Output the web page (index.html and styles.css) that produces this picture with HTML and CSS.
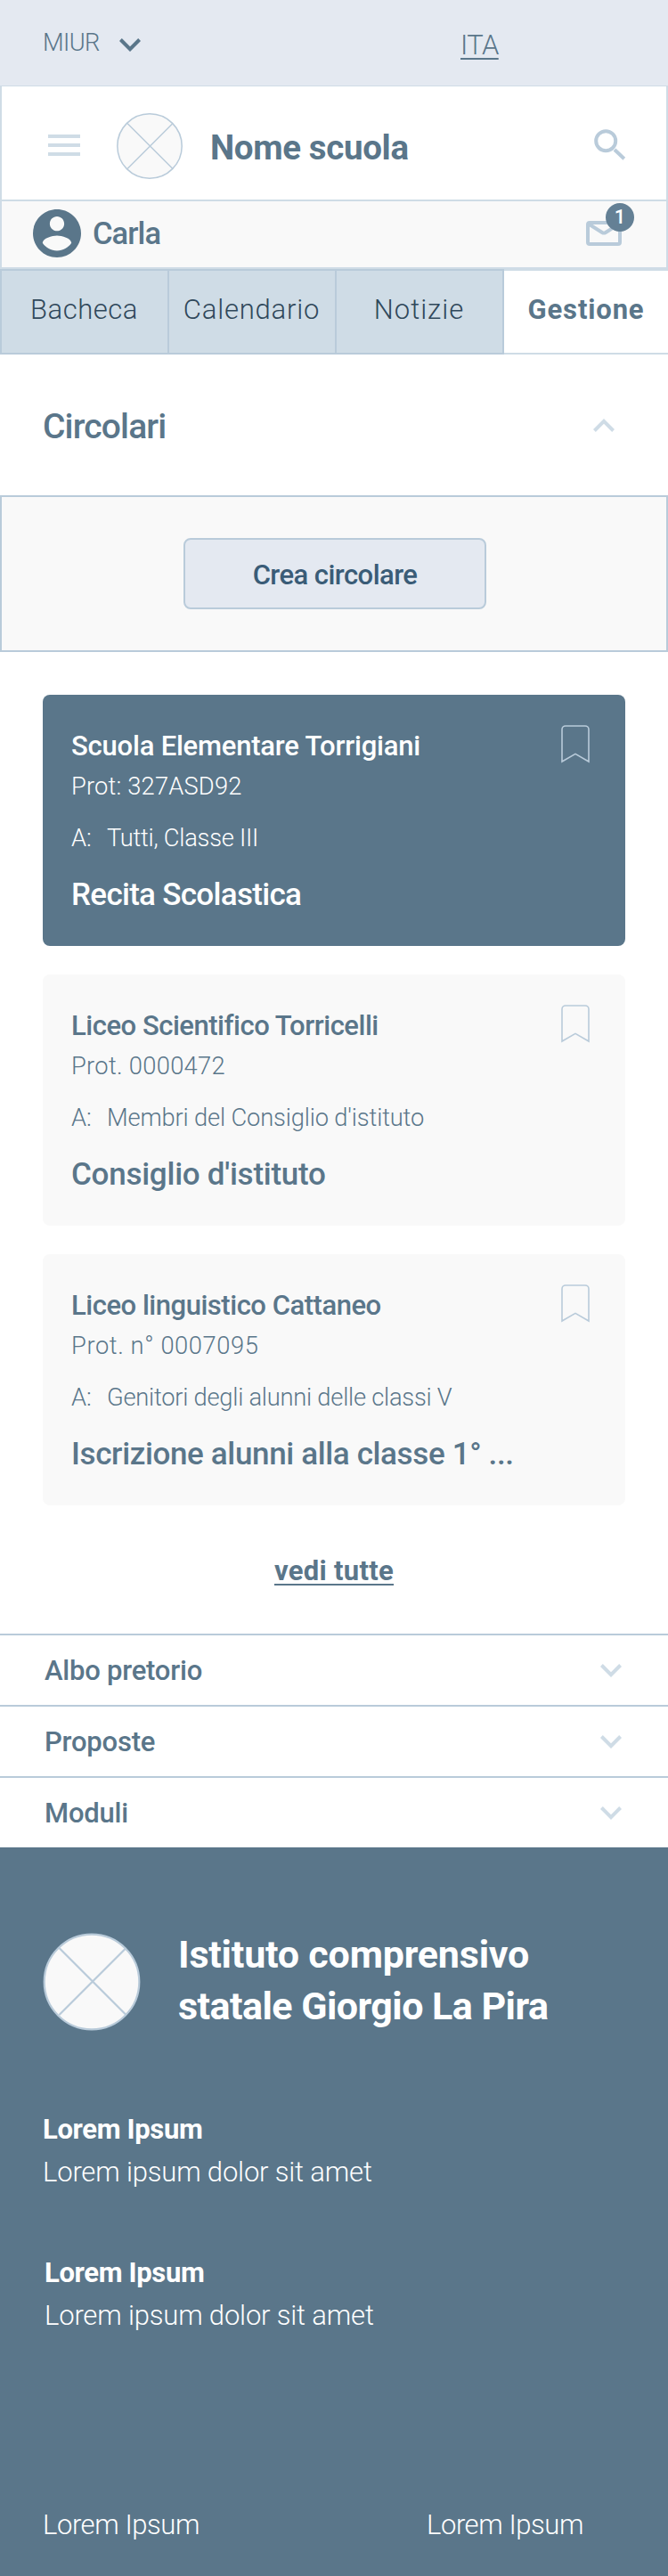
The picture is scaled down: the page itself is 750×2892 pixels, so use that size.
FILE: index.html
```html
<!DOCTYPE html>
<html lang="it">
<head>
<meta charset="utf-8">
<meta name="viewport" content="width=750">
<title>Nome scuola - Gestione circolari</title>
<link rel="stylesheet" href="styles.css">
</head>
<body>
<svg class="defs" width="0" height="0" aria-hidden="true">
  <symbol id="down" viewBox="6 8.59 12 7.41"><path d="M16.59 8.59L12 13.17 7.41 8.59 6 10l6 6 6-6z"/></symbol>
  <symbol id="up" viewBox="6 8 12 7.41"><path d="M12 8l-6 6 1.41 1.41L12 10.83l4.59 4.58L18 14z"/></symbol>
  <symbol id="bookmark" viewBox="0 0 32 43"><path d="M1 41V5a4 4 0 0 1 4-4h22a4 4 0 0 1 4 4v36L16 32.3z"/></symbol>
</svg>

<div class="topbar">
  <a class="miur">MIUR</a>
  <svg class="miur-arrow" width="24" height="15"><use href="#down"/></svg>
  <a class="lang">ITA</a>
</div>

<header class="header">
  <svg class="menu" width="36" height="24" viewBox="0 0 36 24"><path d="M0 2h36M0 12h36M0 22h36"/></svg>
  <svg class="logo" width="74" height="74" viewBox="0 0 74 74"><circle cx="37" cy="37" r="36.2"/><path d="M12 11.5L63 62.5M62.5 12L12 62.5"/></svg>
  <h1 class="school">Nome scuola</h1>
  <svg class="search" width="36" height="36" viewBox="0 0 36 36"><circle cx="13.2" cy="13.2" r="11"/><path d="M23 23l10.8 10.3"/></svg>
</header>

<div class="user">
  <svg class="avatar" width="54" height="54" viewBox="2 2 20 20"><path d="M12 2C6.48 2 2 6.48 2 12s4.48 10 10 10 10-4.48 10-10S17.52 2 12 2zm0 3c1.66 0 3 1.34 3 3s-1.34 3-3 3-3-1.34-3-3 1.34-3 3-3zm0 14.2c-2.5 0-4.71-1.28-6-3.22.03-1.99 4-3.08 6-3.08 1.99 0 5.97 1.09 6 3.08-1.29 1.94-3.5 3.22-6 3.22z"/></svg>
  <span class="user-name">Carla</span>
  <div class="inbox">
    <svg width="40" height="28" viewBox="0 0 40 28"><rect x="2" y="2" width="36" height="24" rx="2"/><path d="M3 3.5L18 13q2 1.2 4 0L37 3.5"/></svg>
    <span class="badge">1</span>
  </div>
</div>

<nav class="tabs">
  <a class="tab bacheca">Bacheca</a>
  <a class="tab calendario">Calendario</a>
  <a class="tab notizie">Notizie</a>
  <a class="tab active">Gestione</a>
</nav>

<main>
  <section class="section-head">
    <h2>Circolari</h2>
    <svg class="chevron" width="24" height="15"><use href="#up"/></svg>
  </section>

  <div class="create">
    <button class="create-btn">Crea circolare</button>
  </div>

  <div class="cards">
    <article class="card selected">
      <svg class="mark" width="32" height="43"><use href="#bookmark"/></svg>
      <h3 class="t1">Scuola Elementare Torrigiani</h3>
      <p class="prot p1">Prot: 327ASD92</p>
      <p class="to"><span class="to-label">A:</span><span class="d1">Tutti, Classe III</span></p>
      <p class="subject s1">Recita Scolastica</p>
    </article>
    <article class="card">
      <svg class="mark" width="32" height="43"><use href="#bookmark"/></svg>
      <h3 class="t2">Liceo Scientifico Torricelli</h3>
      <p class="prot p2">Prot. 0000472</p>
      <p class="to"><span class="to-label">A:</span><span class="d2">Membri del Consiglio d'istituto</span></p>
      <p class="subject s2">Consiglio d'istituto</p>
    </article>
    <article class="card">
      <svg class="mark" width="32" height="43"><use href="#bookmark"/></svg>
      <h3 class="t2">Liceo linguistico Cattaneo</h3>
      <p class="prot p3">Prot. n° 0007095</p>
      <p class="to"><span class="to-label">A:</span><span class="d3">Genitori degli alunni delle classi V</span></p>
      <p class="subject s3">Iscrizione alunni alla classe 1° ...</p>
    </article>
  </div>

  <div class="more"><a>vedi tutte</a></div>

  <ul class="accordion">
    <li><span class="albo">Albo pretorio</span><svg class="chevron" width="24" height="15"><use href="#down"/></svg></li>
    <li><span>Proposte</span><svg class="chevron" width="24" height="15"><use href="#down"/></svg></li>
    <li><span>Moduli</span><svg class="chevron" width="24" height="15"><use href="#down"/></svg></li>
  </ul>
</main>

<footer class="footer">
  <div class="brand">
    <svg class="logo" width="110" height="110" viewBox="0 0 110 110"><circle cx="55" cy="55" r="53.3"/><path d="M18.5 17L93.5 92M93.5 17L18.5 92"/></svg>
    <p class="institute"><span class="line1">Istituto comprensivo</span><span class="line2">statale Giorgio La Pira</span></p>
  </div>
  <div class="info">
    <strong>Lorem Ipsum</strong>
    <p>Lorem ipsum dolor sit amet</p>
  </div>
  <div class="info second">
    <strong>Lorem Ipsum</strong>
    <p>Lorem ipsum dolor sit amet</p>
  </div>
  <div class="links"><a>Lorem Ipsum</a><a>Lorem Ipsum</a></div>
</footer>
</body>
</html>
```

FILE: styles.css
```css
:root {
  --slate: #5a768a;
  --line: #b9cbda;
  --pale: #cfdce6;
  --mist: #e4e9f1;
  --off: #f9f9f9;
}
* { box-sizing: border-box; margin: 0; padding: 0; }
body {
  width: 750px;
  background: #fff;
  color: var(--slate);
  font-family: Roboto, "Open Sans", sans-serif;
  font-size: 31px;
  font-weight: 300;
}
svg { display: block; flex: none; fill: currentColor; }
.defs { position: absolute; }

.topbar {
  display: flex;
  align-items: flex-start;
  height: 96px;
  padding: 28px 0 0 48px;
  background: var(--mist);
  line-height: 40px;
}
.miur { width: 86px; font-size: 27.3px; letter-spacing: -.6px; }
.miur-arrow { margin-top: 15px; }
.lang {
  margin: 3px 0 0 359px;
  letter-spacing: -.6px;
  text-decoration: underline;
  text-decoration-thickness: 2px;
  text-decoration-skip-ink: none;
  text-underline-offset: 4px;
}

.header {
  display: flex;
  align-items: flex-start;
  height: 130px;
  padding: 0 45px 0 52px;
  border: 2px solid var(--pale);
  border-top-width: 1px;
}
.menu { margin-top: 54px; fill: none; stroke: var(--pale); stroke-width: 4; }
.logo { fill: var(--off); stroke: var(--line); stroke-width: 1.5; }
.header .logo { margin: 30px 0 0 41px; }
.school {
  flex: 1;
  margin: 44px 0 0 31px;
  font-size: 38.5px;
  font-weight: 700;
  line-height: 50px;
  letter-spacing: -.35px;
}
.search { margin-top: 48px; fill: none; stroke: var(--line); stroke-width: 4; }

.user {
  display: flex;
  align-items: flex-start;
  height: 76px;
  padding: 0 50px 0 35px;
  border: solid var(--pale);
  border-width: 0 2px 2px;
  background: var(--off);
}
.avatar { margin-top: 9px; }
.user-name {
  flex: 1;
  margin: 16px 0 0 13px;
  font-size: 34.5px;
  font-weight: 500;
  line-height: 40px;
  letter-spacing: -.9px;
}
.inbox { position: relative; margin-top: 22px; }
.inbox svg { fill: none; stroke: var(--line); stroke-width: 4; }
.badge {
  position: absolute;
  left: 22px;
  top: -20px;
  width: 32px;
  height: 32px;
  border-radius: 50%;
  background: #648095;
  color: #fff;
  font-size: 22px;
  font-weight: 500;
  line-height: 32px;
  text-align: center;
}

.tabs { display: flex; height: 96px; }
.tab {
  width: 188px;
  border: solid var(--line);
  border-width: 2px 0 2px 2px;
  background: var(--pale);
  color: #30485b;
  line-height: 87px;
  text-align: center;
}
.bacheca { padding-right: 1px; letter-spacing: .5px; }
.calendario { padding-right: 1px; letter-spacing: .8px; }
.notizie { width: 190px; padding-right: 1px; border-right-width: 2px; letter-spacing: 1px; }
.active {
  width: 184px;
  border-color: var(--pale);
  border-left: 0;
  background: #fff;
  color: var(--slate);
  font-weight: 700;
  letter-spacing: .85px;
}

.section-head {
  display: flex;
  justify-content: space-between;
  height: 158px;
  padding: 56px 60px 0 48px;
}
.section-head h2 {
  font-size: 39px;
  font-weight: 500;
  line-height: 50px;
  letter-spacing: -.85px;
}
.section-head .chevron { margin-top: 16px; }
.chevron { color: var(--pale); }

.create {
  display: flex;
  justify-content: center;
  height: 176px;
  padding-top: 46px;
  border: 2px solid var(--line);
  background: var(--off);
}
.create-btn {
  width: 340px;
  height: 80px;
  margin-left: 2px;
  border: 2px solid var(--line);
  border-radius: 8px;
  background: var(--mist);
  color: #3a5c77;
  font: 500 31px/79px Roboto, "Open Sans", sans-serif;
  letter-spacing: -.55px;
}

.cards {
  display: flex;
  flex-direction: column;
  gap: 32px;
  padding: 48px 48px 0;
}
.card {
  position: relative;
  height: 282px;
  padding: 36px 32px 0;
  border-radius: 8px;
  background: var(--off);
}
.selected { background: var(--slate); color: #fff; }
.mark {
  position: absolute;
  top: 34px;
  right: 40px;
  fill: none;
  stroke: var(--line);
  stroke-width: 1.6;
}
.card h3 { font-size: 31px; font-weight: 500; line-height: 44px; }
.t1 { letter-spacing: -.21px; }
.t2 { letter-spacing: -.47px; }
.prot, .to { font-size: 27.3px; }
.prot { line-height: 47px; }
.p1 { letter-spacing: .18px; }
.p2 { letter-spacing: .3px; }
.p3 { letter-spacing: .6px; }
.to { display: flex; margin-top: 11px; line-height: 46px; }
.to-label { width: 40px; }
.d1 { letter-spacing: -.25px; }
.d2 { letter-spacing: -.15px; }
.d3 { letter-spacing: -.24px; }
.subject { margin-top: 17px; font-size: 35px; font-weight: 500; line-height: 48px; }
.s1 { letter-spacing: -.7px; }
.s2 { letter-spacing: -.25px; }
.s3 { letter-spacing: -.36px; }

.more {
  height: 144px;
  padding-top: 50px;
  font-weight: 700;
  line-height: 48px;
  letter-spacing: .29px;
  text-align: center;
}
.more a {
  text-decoration: underline;
  text-decoration-thickness: 1.5px;
  text-underline-offset: 4px;
}

.accordion { list-style: none; }
.accordion li {
  display: flex;
  justify-content: space-between;
  align-items: center;
  height: 80px;
  padding: 0 52px 0 50px;
  border-top: 2px solid var(--line);
  font-weight: 500;
  line-height: 78px;
  letter-spacing: -.2px;
}
.accordion span { padding-top: 1px; }
.albo { letter-spacing: -.22px; }

.footer {
  height: 818px;
  padding: 91px 0 0 48px;
  background: var(--slate);
  color: #fff;
  line-height: 48px;
}
.brand { display: flex; height: 202px; }
.footer .logo { margin-top: 5px; stroke-width: 2.2; }
.institute {
  display: flex;
  flex-direction: column;
  margin-left: 42px;
  font-size: 43px;
  font-weight: 700;
  line-height: 58px;
}
.line1 { letter-spacing: -.2px; }
.line2 { letter-spacing: -.54px; }
.info strong { display: block; font-weight: 700; letter-spacing: -.35px; }
.info p { letter-spacing: -.17px; }
.second { margin: 65px 0 0 2px; }
.links { display: flex; margin-top: 187px; letter-spacing: -.42px; }
.links a { flex: none; width: 431px; }
.links a:last-child { width: auto; }
```
